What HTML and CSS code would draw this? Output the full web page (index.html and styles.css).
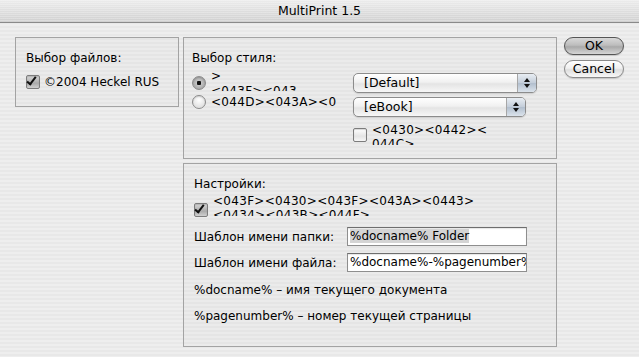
FILE: index.html
```html
<!DOCTYPE html>
<html lang="ru">
<head>
  <meta charset="UTF-8">
  <title>MultiPrint 1.5</title>
  <link rel="stylesheet" href="styles.css">
</head>
<body>
  <div class="window">
    <header class="titlebar">MultiPrint 1.5</header>

    <div class="content">
      <!-- Выбор файлов -->
      <section class="group files">
        <div class="group-title">Выбор файлов:</div>
        <label class="check-row">
          <span class="checkbox checked"></span>
          <span>©2004 Heckel RUS</span>
        </label>
      </section>

      <div class="middle">
        <!-- Выбор стиля -->
        <section class="group style">
          <div class="group-title">Выбор стиля:</div>
          <div class="style-body">
            <div class="radios">
              <div class="radio-row first">
                <span class="radio on"></span>
                <span class="clip two">
                  <span class="line">&gt;</span>
                  <span class="line">&lt;043F&gt;&lt;043</span>
                </span>
              </div>
              <div class="radio-row">
                <span class="radio"></span>
                <span class="line">&lt;044D&gt;&lt;043A&gt;&lt;0</span>
              </div>
            </div>
            <div class="popups">
              <div class="popup wide"><span class="popup-text">[Default]</span><span class="popup-arrows"></span></div>
              <div class="popup"><span class="popup-text">[eBook]</span><span class="popup-arrows"></span></div>
              <div class="check-row small">
                <span class="checkbox"></span>
                <span class="clip two">
                  <span class="line">&lt;0430&gt;&lt;0442&gt;&lt;</span>
                  <span class="line">044C&gt;</span>
                </span>
              </div>
            </div>
          </div>
        </section>

        <!-- Настройки -->
        <section class="group settings">
          <div class="group-title">Настройки:</div>
          <div class="check-row small">
            <span class="checkbox checked"></span>
            <span class="clip two">
              <span class="line">&lt;043F&gt;&lt;0430&gt;&lt;043F&gt;&lt;043A&gt;&lt;0443&gt;</span>
              <span class="line">&lt;0434&gt;&lt;043B&gt;&lt;044F&gt;</span>
            </span>
          </div>
          <div class="field">
            <span class="field-label">Шаблон имени папки:</span>
            <span class="input"><span class="selected">%docname% Folder</span></span>
          </div>
          <div class="field">
            <span class="field-label">Шаблон имени файла:</span>
            <span class="input">%docname%-%pagenumber%</span>
          </div>
          <p class="hint">%docname% – имя текущего документа</p>
          <p class="hint">%pagenumber% – номер текущей страницы</p>
        </section>
      </div>

      <div class="buttons">
        <button class="btn default">OK</button>
        <button class="btn">Cancel</button>
      </div>
    </div>
  </div>
</body>
</html>
```

FILE: styles.css
```css
:root {
  --stripe-a: #eeeeee;
  --stripe-b: #e8e8e8;
  --border:   #a3a3a3;
  --font-base: "DejaVu Sans", "Liberation Sans", sans-serif;
}
*, *::before, *::after { box-sizing: border-box; }
body {
  margin: 0;
  width: 639px; height: 357px; overflow: hidden;
  font-family: var(--font-base);
  font-size: 12px;
  color: #000;
  background: repeating-linear-gradient(180deg, var(--stripe-a) 0 2px, var(--stripe-b) 2px 4px);
}

/* タイトルバー */
.titlebar {
  height: 23px; line-height: 22px;
  text-align: center;
  font-size: 12.5px;
  border-bottom: 1px solid #8a8a8a;
  background:
    repeating-linear-gradient(180deg, rgba(255,255,255,.25) 0 1px, rgba(0,0,0,0) 1px 2px),
    linear-gradient(#ececec, #d0d0d0);
}

.content {
  display: flex;
  padding: 14px 0 0 15px;
}

/* グループボックス */
.group {
  border: 1px solid var(--border);
  background: rgba(0,0,0,.012);
  padding: 12px 10px 0 10px;
}
.group-title { line-height: 16px; }

.files { width: 164px; height: 70px; margin-right: 4px; }
.files .check-row { margin-top: 8px; }

.middle { display: flex; flex-direction: column; gap: 4px; width: 374px; }
.style { height: 122px; padding-left: 8px; }
.settings { height: 184px; padding-left: 10px; }

/* チェックボックス */
.check-row { display: flex; align-items: center; gap: 4px; line-height: 16px; }
.checkbox {
  flex: none;
  width: 14px; height: 14px;
  border: 1px solid #7c7c7c;
  border-radius: 2px;
  background: linear-gradient(#ffffff, #e4e4e4 60%, #f6f6f6);
  box-shadow: inset 0 1px 1px rgba(0,0,0,.15);
  position: relative;
}
.checkbox.checked { background: linear-gradient(#d8d8d8, #aaaaaa 60%, #cfcfcf); }
.checkbox.checked::after {
  content: '';
  position: absolute; left: 2px; top: -1px;
  width: 5px; height: 10px;
  border-right: 2.5px solid #111;
  border-bottom: 2.5px solid #111;
  transform: rotate(38deg);
}

/* ラジオ */
.style-body { display: flex; margin-top: 1px; }
.radios { width: 161px; }
.radio-row { display: flex; align-items: center; gap: 5px; height: 16px; }
.radio-row.first { height: 27px; align-items: flex-start; }
.radio-row.first .radio { margin-top: 9px; }
.radio {
  flex: none;
  width: 14px; height: 14px;
  border: 1px solid #8a8a8a;
  border-radius: 50%;
  background: radial-gradient(circle at 50% 35%, #ffffff, #e2e2e2 70%, #f2f2f2);
  box-shadow: inset 0 1px 1px rgba(0,0,0,.12);
}
.radio.on { background: radial-gradient(circle, #111 0 2px, #c4c4c4 2.5px, #a8a8a8 70%, #d6d6d6); }

.clip { display: flex; flex-direction: column; overflow: hidden; }
.radio-row .clip { height: 22px; margin-top: 2px; }
.radio-row .clip .line { line-height: 15px; }
.check-row .clip.two { height: 22px; }
.line { line-height: 14px; font-size: 12px; letter-spacing: .3px; white-space: nowrap; }
.radio-row > .line { line-height: 16px; }

/* ポップアップ */
.popups { display: flex; flex-direction: column; gap: 4px; margin-top: 6px; }
.popup {
  display: flex;
  width: 173px; height: 20px;
  border: 1px solid #8c8c8c;
  border-radius: 5px;
  overflow: hidden;
  background: linear-gradient(#ffffff, #f1f1f1 45%, #e4e4e4 55%, #f7f7f7);
  box-shadow: 0 1px 1px rgba(0,0,0,.12);
}
.popup.wide { width: 184px; }
.popup-text { flex: 1; padding-left: 10px; line-height: 18px; font-size: 12.5px; }
.popup-arrows {
  width: 19px;
  border-left: 1px solid #a6a6a6;
  background: linear-gradient(#e8edf3, #c3cdd9 50%, #b2bfce 52%, #dbe3ec);
  position: relative;
}
.popup-arrows::before,
.popup-arrows::after {
  content: '';
  position: absolute; left: 6px;
  border-left: 3px solid transparent;
  border-right: 3px solid transparent;
}
.popup-arrows::before { top: 4px; border-bottom: 4px solid #111; }
.popup-arrows::after { bottom: 4px; border-top: 4px solid #111; }
.popups .check-row { margin-top: 2px; gap: 5px; align-items: flex-start; }
.popups .check-row .checkbox { margin-top: 5px; }

/* 設定 */
.settings .check-row { margin-top: 2px; gap: 5px; align-items: flex-start; }
.settings .check-row .checkbox { margin-top: 9px; }
.field { display: flex; align-items: center; height: 19px; margin-top: 7px; }
.settings .check-row + .field { margin-top: 10px; }
.field-label { width: 153px; }
.input {
  width: 180px; height: 19px;
  border: 1px solid #8e8e8e;
  border-top-color: #6e6e6e;
  background: #fff;
  padding: 0 2px;
  line-height: 17px;
  white-space: nowrap; overflow: hidden;
  box-shadow: inset 0 1px 1px rgba(0,0,0,.1);
}
.selected { background: #d4d4d4; }
.hint { margin: 10px 0 0; line-height: 16px; }
.field + .hint { margin-top: 10px; }

/* ボタン */
.buttons { display: flex; flex-direction: column; gap: 5px; margin-left: 7px; }
.btn {
  width: 60px; height: 18px;
  padding: 0;
  font-family: var(--font-base); font-size: 12.5px;
  line-height: 16px;
  color: #000;
  border: 1px solid #8a8a8a;
  border-radius: 9px;
  background: linear-gradient(#ffffff, #f0f0f0 45%, #dedede 55%, #f8f8f8);
  box-shadow: 0 1px 1px rgba(0,0,0,.15);
}
.btn.default {
  border-color: #555;
  background: linear-gradient(#d8d8d8, #bdbdbd 45%, #a9a9a9 55%, #d6d6d6);
}
```
